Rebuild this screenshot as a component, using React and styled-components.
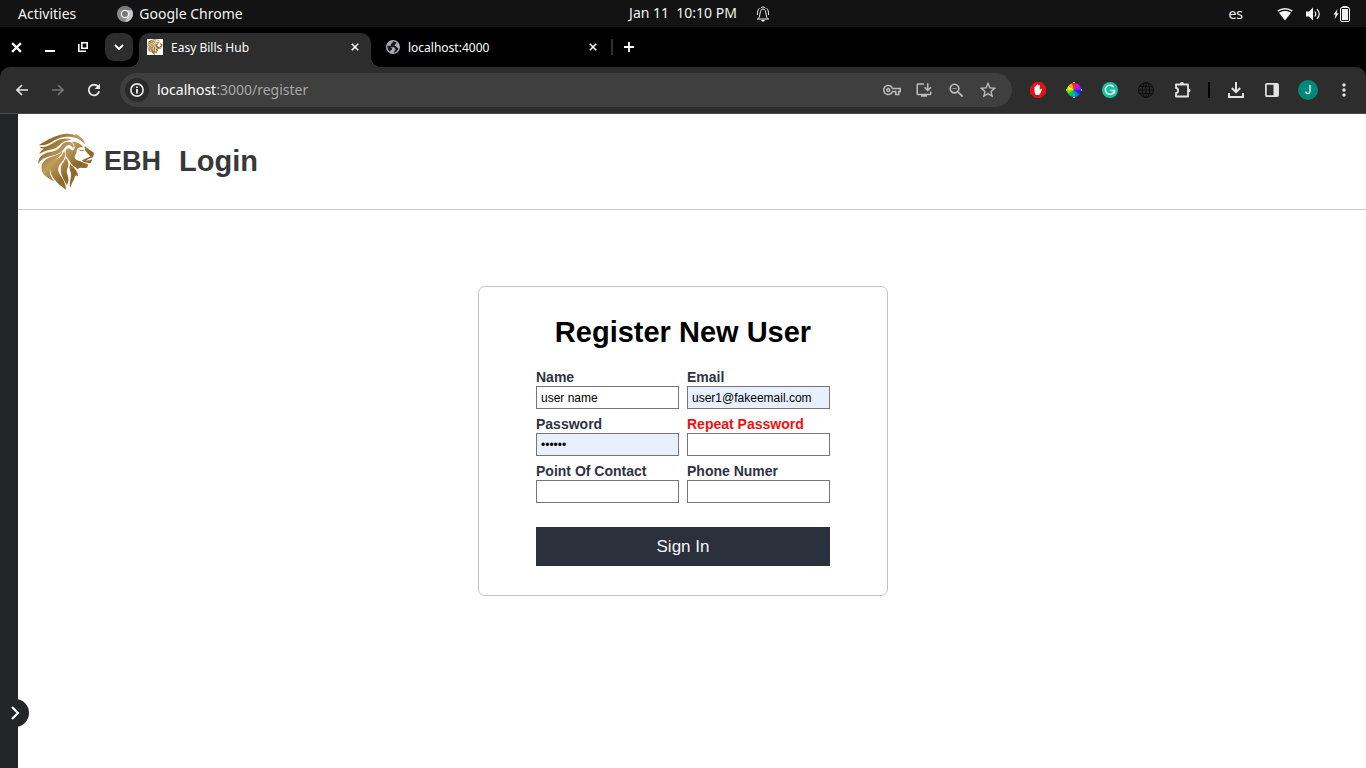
import React from "react";
import styled, { createGlobalStyle, css } from "styled-components";
import {
  MdOutlineVpnKey,
  MdOutlineInstallDesktop,
  MdZoomOut,
  MdStarBorder,
  MdMoreVert,
} from "react-icons/md";

const GlobalStyle = createGlobalStyle`
  *, *::before, *::after { box-sizing: border-box; }
  body { margin: 0; background: #fff; font-family: "Liberation Sans", Arial, sans-serif; }
  button { font: inherit; color: inherit; border: 0; padding: 0; background: none; cursor: pointer; }
  svg { display: block; flex: none; }
`;

const uiFont = css`
  font-family: "Noto Sans", "Open Sans", sans-serif;
`;

const Screen = styled.div`
  min-height: 100vh;
  display: flex;
  flex-direction: column;
`;

/* ---------- desktop bar ---------- */

const SystemBar = styled.header`
  ${uiFont}
  height: 27px;
  background: #131313;
  color: #f2f2f2;
  font-size: 14px;
  line-height: 26px;
  display: grid;
  grid-template-columns: 1fr auto 1fr;
  white-space: pre;
`;

const SystemStart = styled.div`
  display: flex;
  align-items: center;
  gap: 41px;
  padding-left: 18px;
`;

const SystemEnd = styled.div`
  display: flex;
  align-items: center;
  padding: 0 16px 0 19px;
`;

const Indicators = styled.div`
  display: flex;
  align-items: center;
  gap: 12px;
  margin-left: auto;
`;

const Language = styled.button`
  margin-right: 22px;
`;

const AppMenu = styled.button`
  display: flex;
  align-items: center;
  gap: 6px;
`;

/* ---------- browser tabs ---------- */

const TabStrip = styled.nav`
  ${uiFont}
  height: 40px;
  background: #000;
  color: #fff;
  display: flex;
  align-items: center;
  font-size: 12px;
`;

const WindowControls = styled.div`
  display: flex;
  align-items: center;
`;

const WindowButton = styled.button`
  width: 33px;
  height: 28px;
  display: grid;
  place-items: center;
`;

const TabSearch = styled.button`
  width: 28px;
  height: 28px;
  margin: 0 6px;
  border-radius: 9px;
  background: #2d2d2d;
  display: grid;
  place-items: center;
`;

const Tab = styled.div`
  position: relative;
  width: ${(p) => (p.$active ? 232 : 240)}px;
  height: 34px;
  align-self: flex-end;
  padding: ${(p) => (p.$active ? "0 12px 6px 8px" : "0 14px 6px 15px")};
  display: flex;
  align-items: center;
  gap: 8px;
  border-radius: 10px 10px 0 0;
  background: ${(p) => (p.$active ? "#2d2d2d" : "transparent")};

  ${(p) =>
    p.$active &&
    css`
      &::before,
      &::after {
        content: "";
        position: absolute;
        bottom: 0;
        width: 10px;
        height: 10px;
      }
      &::before {
        right: 100%;
        background: radial-gradient(circle at 0 0, transparent 10px, #2d2d2d 10px);
      }
      &::after {
        left: 100%;
        background: radial-gradient(circle at 100% 0, transparent 10px, #2d2d2d 10px);
      }
    `}
`;

const TabTitle = styled.span`
  flex: 1;
`;

const Favicon = styled.span`
  width: 16px;
  height: 16px;
  background: #fff;
  display: grid;
  place-items: center;
`;

const TabDivider = styled.span`
  width: 2px;
  height: 16px;
  margin-right: 11px;
  background: #2f2f2f;
`;

/* ---------- browser toolbar ---------- */

const ToolbarBackdrop = styled.div`
  background: #000;
`;

const Toolbar = styled.div`
  ${uiFont}
  height: 47px;
  padding: 0 4px;
  display: flex;
  align-items: center;
  gap: 8px;
  border-bottom: 1px solid #4a4a4a;
  border-radius: 10px 10px 0 0;
  background: #2d2d2d;
  color: #e3e3e3;
`;

const ToolGroup = styled.div`
  display: flex;
  align-items: center;
`;

const ToolButton = styled.button`
  width: ${(p) => (p.$narrow ? 32 : 36)}px;
  height: 34px;
  display: grid;
  place-items: center;
  color: ${(p) => p.$color || "inherit"};
`;

const AddressBar = styled.form`
  flex: 1;
  height: 34px;
  padding: 0 8px 0 5px;
  display: flex;
  align-items: center;
  border-radius: 17px;
  background: #3f3f3f;
`;

const SiteInfo = styled.button`
  width: 24px;
  height: 24px;
  margin-right: 8px;
  border-radius: 50%;
  background: #2a2a2a;
  display: grid;
  place-items: center;
`;

const Address = styled.a`
  flex: 1;
  font-size: 14px;
  line-height: 20px;
  color: #a8a8a8;
  text-decoration: none;

  span {
    color: #fff;
  }
`;

const ToolDivider = styled.span`
  width: 2px;
  height: 16px;
  margin: 0 8px;
  background: #000;
`;

const Avatar = styled.span`
  width: 20px;
  height: 20px;
  border-radius: 50%;
  background: #00897b;
  color: #fff;
  font-family: Roboto, sans-serif;
  font-size: 12px;
  line-height: 20px;
  text-align: center;
`;

/* ---------- page ---------- */

const Page = styled.div`
  position: relative;
  flex: 1;
  display: grid;
`;

const SideRail = styled.aside`
  grid-area: 1 / 1;
  width: 18px;
  background: #222627;
`;

const RailToggle = styled.button`
  position: absolute;
  left: 1px;
  bottom: 41px;
  width: 28px;
  height: 28px;
  border-radius: 50%;
  background: #222627;
  color: #fff;
  display: grid;
  place-items: center;
`;

const Content = styled.div`
  grid-area: 1 / 1;
  min-width: 0;
`;

const PageHeader = styled.header`
  height: 96px;
  margin-left: 18px;
  padding-left: 20px;
  display: flex;
  align-items: center;
  border-bottom: 1px solid #c8c6c4;
  color: #36383a;
  font-weight: bold;
`;

const Brand = styled.a`
  display: flex;
  align-items: center;
  gap: 9px;
  margin-right: 18px;
  font-size: 27px;
  color: inherit;
  text-decoration: none;
`;

const HeaderLink = styled.a`
  font-size: 29px;
  color: inherit;
  text-decoration: none;
`;

const Card = styled.form`
  width: 410px;
  max-width: 100%;
  margin: 76px auto 40px;
  padding: 28px 57px 29px;
  border: 1px solid #c2c2c2;
  border-radius: 7px;
`;

const CardTitle = styled.h1`
  margin: 0 0 20px;
  font-size: 29px;
  line-height: 34px;
  text-align: center;
  white-space: nowrap;
  color: #000;
`;

const Fields = styled.div`
  display: grid;
  grid-template-columns: 1fr 1fr;
  gap: 7px 8px;
`;

const Field = styled.div`
  min-width: 0;
  display: flex;
  flex-direction: column;
`;

const Label = styled.label`
  font-size: 14px;
  line-height: 17px;
  font-weight: bold;
  white-space: nowrap;
  color: ${(p) => (p.$error ? "#f01010" : "#2f3340")};
`;

const Input = styled.input`
  width: 100%;
  height: 23px;
  padding: 0 4px;
  border: 1px solid #767676;
  border-radius: 0;
  outline: 0;
  background: ${(p) => (p.$filled ? "#e8f0fe" : "#fff")};
  color: #000;
  font-family: inherit;
  font-size: 12px;
`;

const SubmitButton = styled.button`
  width: 100%;
  height: 39px;
  margin-top: 24px;
  background: #2a303c;
  color: #f5f5f5;
  font-size: 17px;
`;

/* ---------- drawings ---------- */

function Lion({ size, id }) {
  return (
    <svg width={size} height={size} viewBox="7 6 168 168" aria-hidden="true">
      <defs>
        <linearGradient id={id} x1="0" y1="0" x2="180" y2="180" gradientUnits="userSpaceOnUse">
          <stop offset="0" stopColor="#7d5c22" />
          <stop offset="0.22" stopColor="#94702f" />
          <stop offset="0.4" stopColor="#bf9d5c" />
          <stop offset="0.62" stopColor="#8d672b" />
          <stop offset="1" stopColor="#a98446" />
        </linearGradient>
      </defs>
      <g fill={`url(#${id})`}>
        <path d="M9 42C30 30 52 14 84 9C98 7 112 9 120 15L114 8C132 14 142 24 146 40C134 26 118 18 100 17C78 16 62 23 50 31C38 39 26 44 9 42Z" />
        <path d="M12 47C32 50 46 38 60 30C74 22 92 20 106 26C88 28 77 34 67 45C53 57 34 53 10 68C15 59 20 55 26 52C20 52 14 50 12 47Z" />
        <path d="M8 98C6 79 19 67 40 63C60 59 68 55 76 43C83 33 96 28 107 35C112 39 114 46 110 51C106 42 98 38 90 45C82 54 78 63 62 69C38 76 17 78 8 98Z" />
        <path d="M18 116C13 93 32 80 52 74C65 70 74 66 79 59C78 72 65 80 55 89C38 105 37 126 54 148C36 140 22 131 18 116Z" />
        <path d="M42 108C44 90 58 86 70 78C78 72 82 66 84 59C91 72 84 85 74 95C60 111 68 124 78 138C86 150 88 160 90 174C66 156 42 136 42 108Z" />
        <path d="M74 115C72 100 85 92 88 79C99 91 98 102 93 112C89 123 96 130 97 142C97 150 94 155 92 160C84 144 75 134 74 115Z" />
        <path d="M102 97C110 108 125 114 125 134C116 126 116 136 113 143C109 152 104 157 103 168C96 152 107 138 104 124C101 112 98 106 102 97Z" />
        <path d="M88 60C90 51 98 48 104 55C111 60 115 56 115 48C115 41 110 35 107 31C123 32 134 38 141 49C130 46 122 49 121 58C121 66 116 70 115 75C115 83 122 86 128 88C138 91 142 96 153 97C156 102 154 108 148 109C139 111 133 105 123 113C118 104 108 104 102 92C96 80 86 76 88 60Z" />
        <path d="M144 44C151 48 158 54 165 60L172 64L170 76C164 81 156 82 148 87C155 87 160 85 167 83C165 87 165 92 161 95C153 94 145 94 136 88C143 82 152 80 161 75C158 69 151 65 148 60C145 55 144 50 144 44Z" />
        <path d="M125 54C131 57 137 57 143 55C139 62 130 60 125 54Z" />
      </g>
    </svg>
  );
}

const ChromeLogo = () => (
  <svg width="16" height="16" viewBox="0 0 16 16" aria-hidden="true">
    <circle cx="8" cy="8" r="8" fill="#8b8b8b" />
    <path d="M8 4.3H15A8 8 0 0 1 8 16L11 10Z" fill="#c9c9c9" />
    <path d="M1.3 3.7A8 8 0 0 1 14.9 4H8Z" fill="#777" />
    <circle cx="8" cy="8" r="3.6" fill="#777" stroke="#f4f4f4" strokeWidth="1.3" />
  </svg>
);

const BellIcon = () => (
  <svg width="14" height="16" viewBox="0 0 14 16" fill="none" stroke="currentColor" aria-hidden="true">
    <path d="M1 13H13M2.5 12.5C4.5 10.5 3.3 3 7 3S9.500 10.500 11.500 12.500M4.600 2.200C5.500.6 8.500.6 9.400 2.200M3.500 2.200C1.700 3.500 1.500 6 1.300 9M10.500 2.200C12.300 3.500 12.500 6 12.700 9" />
    <path d="M5 14H9L8 15.500H6Z" fill="currentColor" stroke="none" />
  </svg>
);

const WifiIcon = () => (
  <svg width="16" height="14" viewBox="0 0 16 14" aria-hidden="true">
    <path d="M.7 4.200C5 .8 11 .8 15.300 4.200" fill="none" stroke="currentColor" strokeWidth="1.500" />
    <path d="M2 5.800C5.500 3.500 10.500 3.500 14 5.800L8 13.400Z" fill="currentColor" />
  </svg>
);

const VolumeIcon = () => (
  <svg width="16" height="14" viewBox="0 0 16 14" aria-hidden="true">
    <path d="M1 4.500H4L8 .6V13.400L4 9.500H1Z" fill="currentColor" />
    <path d="M9.800 4.500C11 6 11 8 9.800 9.500M12 2.200C15 5 15 9 12 11.800" fill="none" stroke="currentColor" strokeWidth="1.200" />
  </svg>
);

const BatteryIcon = () => (
  <svg width="17" height="16" viewBox="0 0 17 16" aria-hidden="true">
    <path d="M4.500 3L.5 8.500H2.600L1.700 13L5.700 7.200H3.600Z" fill="currentColor" />
    <rect x="7.500" y="1.500" width="9" height="14" rx="1.500" fill="none" stroke="currentColor" />
    <path d="M9.500 0H14.500V1.500H9.500ZM9 3H15V14H9Z" fill="currentColor" />
  </svg>
);

const CloseIcon = ({ size }) => (
  <svg width={size} height={size} viewBox="0 0 10 10" fill="none" stroke="currentColor" strokeWidth="2" aria-hidden="true">
    <path d="M1 1L9 9M9 1L1 9" />
  </svg>
);

const PlusIcon = () => (
  <svg width="10" height="10" viewBox="0 0 10 10" fill="none" stroke="currentColor" strokeWidth="1.800" aria-hidden="true">
    <path d="M5 0V10M0 5H10" />
  </svg>
);

const ChevronDown = () => (
  <svg width="10" height="10" viewBox="0 0 10 10" fill="none" stroke="currentColor" strokeWidth="1.800" aria-hidden="true">
    <path d="M1 3L5 7L9 3" />
  </svg>
);

const MinimizeIcon = () => (
  <svg width="10" height="10" viewBox="0 0 10 10" aria-hidden="true">
    <path d="M0 8H10V10H0Z" fill="currentColor" />
  </svg>
);

const RestoreIcon = () => (
  <svg width="10" height="10" viewBox="0 0 10 10" fill="none" stroke="currentColor" strokeWidth="1.600" aria-hidden="true">
    <path d="M3.800.8H9.200V6.200H3.800ZM.8 2V9.200H8" />
  </svg>
);

const ArrowIcon = ({ forward }) => (
  <svg width="12" height="12" viewBox="0 0 12 12" fill="none" stroke="currentColor" strokeWidth="1.700" aria-hidden="true">
    <path d={forward ? "M0 6H11M6 1L11 6L6 11" : "M12 6H1M6 1L1 6L6 11"} />
  </svg>
);

const ReloadIcon = () => (
  <svg width="14" height="14" viewBox="0 0 14 14" aria-hidden="true">
    <path d="M11.500 4.200A5.300 5.300 0 1 0 12.200 8.200" fill="none" stroke="currentColor" strokeWidth="1.800" />
    <path d="M13 .5V6H7.500Z" fill="currentColor" />
  </svg>
);

const InfoIcon = () => (
  <svg width="14" height="14" viewBox="0 0 14 14" aria-hidden="true">
    <circle cx="7" cy="7" r="6.100" fill="none" stroke="currentColor" strokeWidth="1.700" />
    <path d="M6 3.400H8V5H6ZM6 6H8V10.600H6Z" fill="currentColor" />
  </svg>
);

const GlobeFavicon = () => (
  <svg width="14" height="14" viewBox="0 0 14 14" aria-hidden="true">
    <circle cx="7" cy="7" r="7" fill="#a9adb3" />
    <path d="M7.500 1.200C6 2 7 3 5.500 3.500S5.500 5.800 4.500 6L1.500 5.500C1.300 8 2 10 4 11.800C4.300 10 5.500 10.500 6 9.200C6.400 8 5 8 4.500 7.200H8C9 7.500 8.500 8.800 9.500 9C9.500 10.500 8 11 7.800 12.700C10 12.300 11.800 10.800 12.500 8.500L11 7.500C10.500 6 9 6.500 8.600 5.500C8.300 4.500 10 4.500 10.600 2.700C9.600 1.800 8.800 1.400 7.500 1.200Z" fill="#16181b" />
  </svg>
);

const BlockerIcon = () => (
  <svg width="16" height="16" viewBox="0 0 16 16" aria-hidden="true">
    <path d="M4.700 0H11.300L16 4.700V11.300L11.300 16H4.700L0 11.300V4.700Z" fill="#dc1414" />
    <path d="M4.500 8.500V5.200C4.500 4.300 5.700 4.300 5.700 5.200V3.700C5.700 2.700 7 2.700 7 3.700V3C7 2 8.400 2 8.400 3V3.700C8.500 2.800 9.800 2.800 9.800 3.800V8L10.700 7C11.500 6.300 12.300 7 11.800 7.800L10.300 11.500C9.500 13.600 5.700 13.700 4.900 11.500Z" fill="#fff" />
  </svg>
);

const wheelColors = ["#f22", "#f0f", "#82f", "#22f", "#08d", "#0bb", "#0c5", "#7e0", "#ff0", "#fa0"];
const ColorWheelIcon = () => (
  <svg width="16" height="16" viewBox="-8 -8 16 16" aria-hidden="true">
    {wheelColors.map((color, i) => {
      const a = ((i * 36 - 105) * Math.PI) / 180;
      const b = a + (36 * Math.PI) / 180;
      return (
        <path
          key={color}
          fill={color}
          d={`M0 0L${7 * Math.cos(a)} ${7 * Math.sin(a)}A7 7 0 0 1 ${7 * Math.cos(b)} ${7 * Math.sin(b)}Z`}
        />
      );
    })}
    <path d="M-1 -7H1V-8H-1ZM-1 7H1V8H-1ZM-8 -1V1H-7V-1ZM7 -1V1H8V-1Z" fill="#bbb" />
  </svg>
);

const WritingIcon = () => (
  <svg width="16" height="16" viewBox="0 0 16 16" aria-hidden="true">
    <circle cx="8" cy="8" r="8" fill="#15c39a" />
    <path d="M11.700 5.100A4.600 4.600 0 1 0 12.500 8.500H8.500M12.500 8.500V11.500" fill="none" stroke="#fff" strokeWidth="1.400" />
  </svg>
);

const WireGlobeIcon = () => (
  <svg width="16" height="16" viewBox="0 0 16 16" fill="none" stroke="#0c0c0c" aria-hidden="true">
    <circle cx="8" cy="8" r="7.400" />
    <ellipse cx="8" cy="8" rx="3.800" ry="7.400" />
    <path d="M8 .6V15.400M.6 8H15.400M1.800 4.300H14.200M1.800 11.700H14.200" />
  </svg>
);

const PuzzleIcon = () => (
  <svg width="18" height="18" viewBox="0 0 18 18" aria-hidden="true">
    <path d="M3 3.500H15V15.500H3V12C5.800 12 5.800 7 3 7Z" fill="none" stroke="currentColor" strokeWidth="1.800" strokeLinejoin="round" />
    <path d="M7 3A2 2 0 0 1 11 3ZM15.500 7.500A2 2 0 0 1 15.500 11.500Z" fill="currentColor" />
  </svg>
);

const DownloadIcon = () => (
  <svg width="16" height="16" viewBox="0 0 16 16" fill="none" stroke="currentColor" strokeWidth="2" aria-hidden="true">
    <path d="M8 0V10M3.800 6L8 10.200L12.200 6M1 11V15H15V11" />
  </svg>
);

const SidePanelIcon = () => (
  <svg width="14" height="14" viewBox="0 0 14 14" aria-hidden="true">
    <rect x=".9" y=".9" width="12.200" height="12.200" rx="1" fill="none" stroke="currentColor" strokeWidth="1.700" />
    <path d="M8.500 1H13V13H8.500Z" fill="currentColor" />
  </svg>
);

const ChevronRight = () => (
  <svg width="10" height="14" viewBox="0 0 10 14" fill="none" stroke="currentColor" strokeWidth="2.200" aria-hidden="true">
    <path d="M2 1L8 7L2 13" />
  </svg>
);

/* ---------- data ---------- */

const fields = [
  { id: "name", label: "Name", type: "text", value: "user name" },
  { id: "email", label: "Email", type: "email", value: "user1@fakeemail.com", filled: true },
  { id: "password", label: "Password", type: "password", value: "secret", filled: true },
  { id: "repeat", label: "Repeat Password", type: "password", value: "", error: true },
  { id: "contact", label: "Point Of Contact", type: "text", value: "" },
  { id: "phone", label: "Phone Numer", type: "tel", value: "" },
];

const addressTools = [
  { label: "Passwords", icon: <MdOutlineVpnKey size={18} /> },
  { label: "Install app", icon: <MdOutlineInstallDesktop size={18} /> },
  { label: "Zoom", icon: <MdZoomOut size={19} /> },
  { label: "Bookmark", icon: <MdStarBorder size={20} /> },
];

const extensions = [
  { label: "Blocker", icon: <BlockerIcon /> },
  { label: "Color picker", icon: <ColorWheelIcon /> },
  { label: "Writing helper", icon: <WritingIcon /> },
  { label: "Network", icon: <WireGlobeIcon /> },
  { label: "Extensions", icon: <PuzzleIcon /> },
];

const stop = (event) => event.preventDefault();

export default function App() {
  return (
    <Screen>
      <GlobalStyle />
      <SystemBar>
        <SystemStart>
          <button type="button">Activities</button>
          <AppMenu type="button">
            <ChromeLogo />
            Google Chrome
          </AppMenu>
        </SystemStart>
        <time>{"Jan 11  10:10 PM"}</time>
        <SystemEnd>
          <BellIcon />
          <Indicators>
            <Language type="button">es</Language>
            <WifiIcon />
            <VolumeIcon />
            <BatteryIcon />
          </Indicators>
        </SystemEnd>
      </SystemBar>

      <TabStrip>
        <WindowControls>
          <WindowButton type="button" aria-label="Close window"><CloseIcon size={11} /></WindowButton>
          <WindowButton type="button" aria-label="Minimize"><MinimizeIcon /></WindowButton>
          <WindowButton type="button" aria-label="Restore"><RestoreIcon /></WindowButton>
        </WindowControls>
        <TabSearch type="button" aria-label="Search tabs"><ChevronDown /></TabSearch>
        <Tab $active>
          <Favicon><Lion size={16} id="gold-small" /></Favicon>
          <TabTitle>Easy Bills Hub</TabTitle>
          <button type="button" aria-label="Close tab"><CloseIcon size={8} /></button>
        </Tab>
        <Tab>
          <GlobeFavicon />
          <TabTitle>localhost:4000</TabTitle>
          <button type="button" aria-label="Close tab"><CloseIcon size={8} /></button>
        </Tab>
        <TabDivider />
        <button type="button" aria-label="New tab"><PlusIcon /></button>
      </TabStrip>

      <ToolbarBackdrop>
        <Toolbar>
          <ToolGroup>
            <ToolButton type="button" aria-label="Back"><ArrowIcon /></ToolButton>
            <ToolButton type="button" aria-label="Forward" $color="#757575"><ArrowIcon forward /></ToolButton>
            <ToolButton type="button" aria-label="Reload"><ReloadIcon /></ToolButton>
          </ToolGroup>
          <AddressBar onSubmit={stop}>
            <SiteInfo type="button" aria-label="Site information"><InfoIcon /></SiteInfo>
            <Address href="#register"><span>localhost</span>:3000/register</Address>
            {addressTools.map((tool) => (
              <ToolButton key={tool.label} type="button" aria-label={tool.label} $narrow $color="#bdbdbd">
                {tool.icon}
              </ToolButton>
            ))}
          </AddressBar>
          <ToolGroup>
            {extensions.map((tool) => (
              <ToolButton key={tool.label} type="button" aria-label={tool.label}>{tool.icon}</ToolButton>
            ))}
            <ToolDivider />
            <ToolButton type="button" aria-label="Downloads"><DownloadIcon /></ToolButton>
            <ToolButton type="button" aria-label="Side panel"><SidePanelIcon /></ToolButton>
            <ToolButton type="button"><Avatar>J</Avatar></ToolButton>
            <ToolButton type="button" aria-label="Menu"><MdMoreVert size={20} /></ToolButton>
          </ToolGroup>
        </Toolbar>
      </ToolbarBackdrop>

      <Page>
        <Content>
          <PageHeader>
            <Brand href="#home">
              <Lion size={57} id="gold" />
              EBH
            </Brand>
            <HeaderLink href="#login">Login</HeaderLink>
          </PageHeader>
          <Card onSubmit={stop}>
            <CardTitle>Register New User</CardTitle>
            <Fields>
              {fields.map((field) => (
                <Field key={field.id}>
                  <Label htmlFor={field.id} $error={field.error}>{field.label}</Label>
                  <Input
                    id={field.id}
                    type={field.type}
                    defaultValue={field.value}
                    autoComplete="off"
                    $filled={field.filled}
                  />
                </Field>
              ))}
            </Fields>
            <SubmitButton type="submit">Sign In</SubmitButton>
          </Card>
        </Content>
        <SideRail />
        <RailToggle type="button" aria-label="Open menu"><ChevronRight /></RailToggle>
      </Page>
    </Screen>
  );
}
